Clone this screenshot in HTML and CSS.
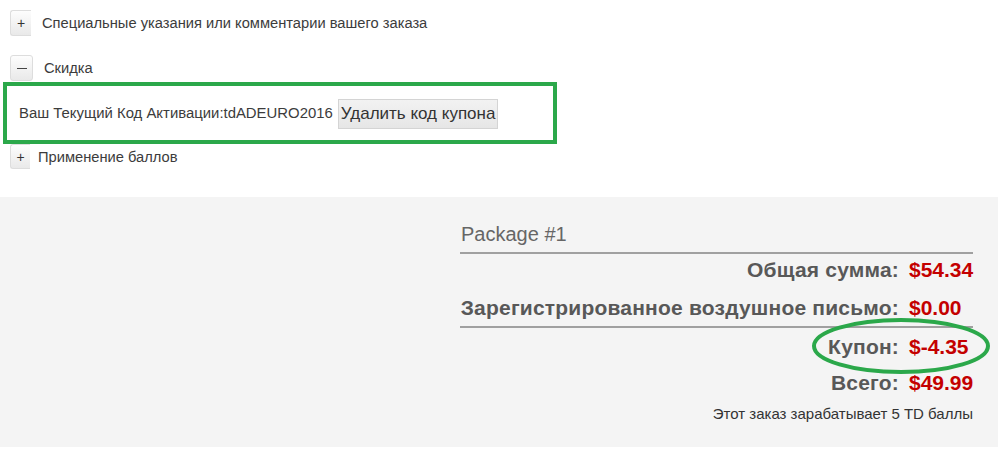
FILE: index.html
```html
<!DOCTYPE html>
<html>
<head>
<meta charset="UTF-8">
<title>Оформление заказа</title>
<link rel="stylesheet" href="styles.css">
</head>
<body>
	<div class="options">
		<div class="opt opt-notes">
			<span class="tgl">+</span>
			<span class="opt-title">Специальные указания или комментарии вашего заказа</span>
		</div>
		<div class="opt opt-discount">
			<span class="tgl tgl-wide"><i class="minus"></i></span>
			<span class="opt-title">Скидка</span>
		</div>
		<div class="coupon-box">
			<span class="coupon-text">Ваш Текущий Код Активации:tdADEURO2016</span>
			<button class="btn-remove">Удалить код купона</button>
		</div>
		<div class="opt opt-points">
			<span class="tgl tgl-small">+</span>
			<span class="opt-title">Применение баллов</span>
		</div>
	</div>

	<div class="summary">
		<div class="package">
			<div class="pkg-title">Package #1</div>
			<div class="totals">
				<div class="row row-sub"><span class="lbl">Общая сумма:</span><span class="val">$54.34</span></div>
				<div class="row row-ship"><span class="lbl">Зарегистрированное воздушное письмо:</span><span class="val">$0.00</span></div>
				<div class="row row-coupon"><span class="lbl">Купон:</span><span class="val">$-4.35</span></div>
				<div class="row row-total"><span class="lbl">Всего:</span><span class="val">$49.99</span></div>
			</div>
			<!-- отметка маркером вокруг купона -->
			<svg class="mark" width="180" height="58" viewBox="0 0 180 58">
				<ellipse cx="90" cy="29" rx="87" ry="26" fill="none" stroke="#2ba84a" stroke-width="4"/>
			</svg>
			<div class="earn">Этот заказ зарабатывает 5 TD баллы</div>
		</div>
	</div>
</body>
</html>
```

FILE: styles.css
```css
body{
	margin: 0;
	font-family: "Liberation Sans", Arial, sans-serif;
	color: #333;
	background: #fff;
}

/* верхний блок с опциями */
.options{
	padding-top: 10px;
	height: 197px;
	box-sizing: border-box;
}
.opt{
	display: flex;
	align-items: center;
	padding-left: 10px;
}
.opt-title{
	font-size: 14.7px;
	color: #3c3c3c;
}
.tgl{
	display: inline-flex;
	align-items: center;
	justify-content: center;
	width: 21px;
	height: 26px;
	box-sizing: border-box;
	border: 1px solid #ddd;
	border-right: none;
	border-radius: 3px 0 0 3px;
	background: linear-gradient(#fdfdfd, #e9e9e9);
	font-size: 14px;
	color: #333;
	margin-right: 11px;
}
.tgl-wide{
	width: 23px;
	border-right: 1px solid #ddd;
	border-radius: 3px;
}
.minus{
	display: block;
	width: 10px;
	height: 1px;
	background: #444;
	margin-top: 1px;
}
.tgl-small{
	width: 20px;
	height: 25px;
	margin-right: 8px;
}
.opt-discount{
	margin-top: 19px;
}

/* зеленая рамка */
.coupon-box{
	display: flex;
	align-items: center;
	width: 554px;
	height: 62px;
	box-sizing: border-box;
	margin: 1px 0 0 3px;
	padding-left: 12px;
	border: 4px solid #2ba84a;
}
.coupon-text{
	font-size: 14.9px;
	color: #3c3c3c;
	margin-right: 5px;
}
.btn-remove{
	font-family: "Liberation Sans", Arial, sans-serif;
	font-size: 17px;
	color: #333;
	height: 30px;
	padding: 0 2px;
	border: 1px solid #d4d4d4;
	background: linear-gradient(#f2f2f2, #e6e6e6);
	margin-top: 1px;
}
.opt-points{
	margin-top: 0;
}

/* итоговая сумма */
.summary{
	width: 998px;
	height: 250px;
	background: #f4f4f4;
	padding-top: 26px;
	box-sizing: border-box;
}
.package{
	position: relative;
	width: 513px;
	margin-left: 460px;
}
.pkg-title{
	font-size: 20px;
	line-height: 23px;
	color: #666;
	padding: 0 0 6px 1px;
	border-bottom: 2px solid #a0a0a0;
}
.totals{
	font-size: 21px;
	font-weight: bold;
}
.row{
	display: flex;
	justify-content: flex-end;
	align-items: center;
	box-sizing: border-box;
	white-space: nowrap;
}
.lbl{
	color: #585858;
	margin-right: 10px;
	letter-spacing: 0.2px;
}
.val{
	width: 64px;
	color: #c40000;
}
.row-sub{
	height: 32px;
}
.row-ship{
	height: 42px;
	padding-top: 4px;
	border-bottom: 2px solid #a0a0a0;
}
.row-coupon{
	height: 38px;
}
.row-total{
	height: 34px;
}
.mark{
	position: absolute;
	left: 351px;
	top: 94px;
}
.earn{
	font-size: 15px;
	line-height: 17px;
	color: #333;
	text-align: right;
	margin-top: 5px;
}
```
